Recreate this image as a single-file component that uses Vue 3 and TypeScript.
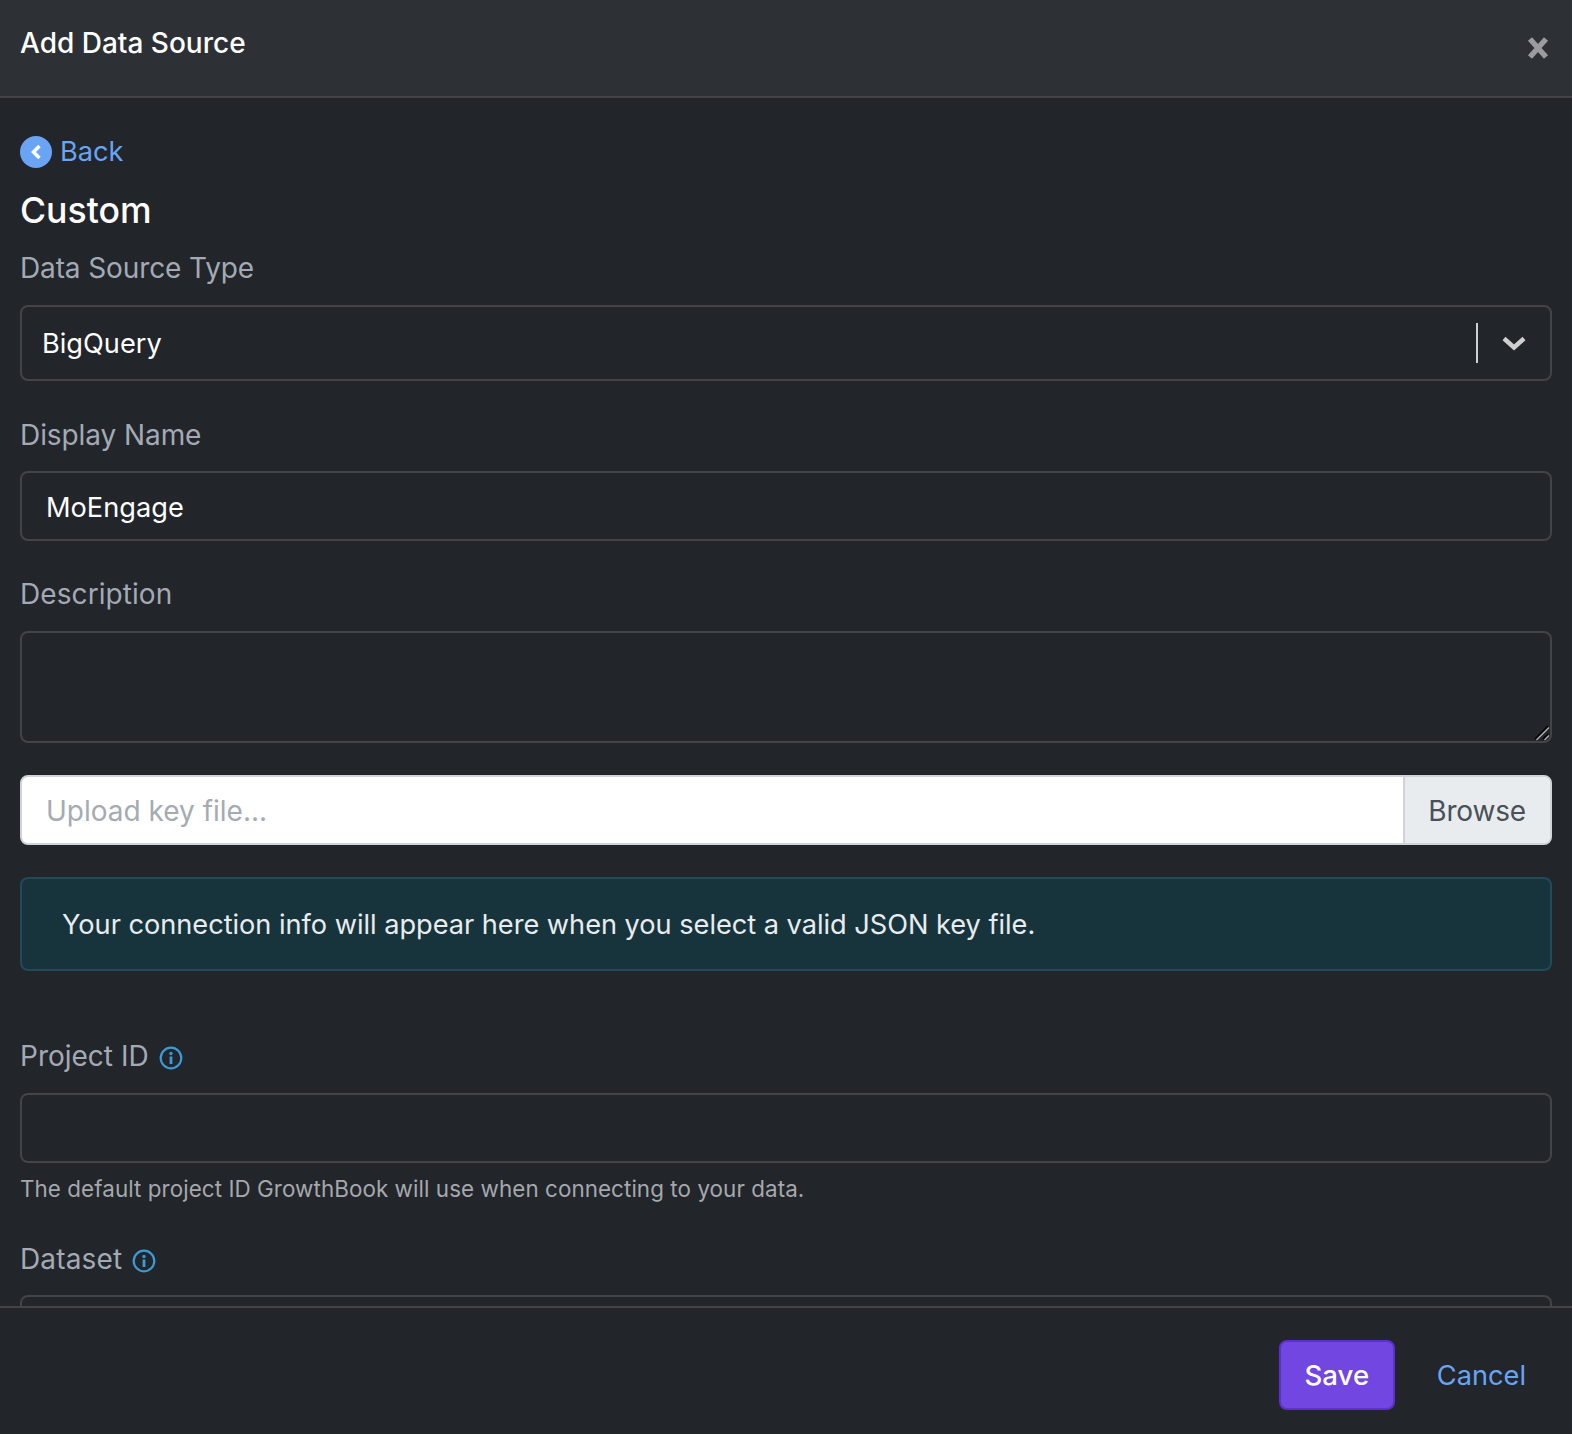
<script setup lang="ts">
const hint: string = 'The default project ID GrowthBook will use when connecting to your data.'
</script>

<template>
  <div class="modal">
    <header class="head">
      <h1 class="title">Add Data Source</h1>
      <button class="close" aria-label="Close">
        <svg width="22" height="24" viewBox="0 0 22 24"><path d="M3 3 19 21M19 3 3 21" stroke="#9a9ca0" stroke-width="5.400" fill="none" /></svg>
      </button>
    </header>

    <main class="body">
      <a class="back">
        <span class="back-dot">
          <svg width="32" height="32" viewBox="0 0 32 32"><path d="M19.500 10 13.500 16l6 6" stroke="#fff" stroke-width="3.500" fill="none" /></svg>
        </span>
        <span>Back</span>
      </a>
      <h2 class="sub">Custom</h2>

      <label class="label l-type">Data Source Type</label>
      <div class="select">
        <span>BigQuery</span>
        <span class="sep"></span>
        <svg class="chev" width="26" height="16" viewBox="0 0 26 16"><path d="M3 3.500 13 12.500 23 3.500" stroke="#cfd0d2" stroke-width="4.400" fill="none" /></svg>
      </div>

      <label class="label l-name">Display Name</label>
      <div class="input value">MoEngage</div>

      <label class="label l-desc">Description</label>
      <div class="textarea">
        <svg class="grip" width="16" height="16" viewBox="0 0 16 16">
          <path d="M1 14 14 1" stroke="#000" stroke-width="1.500" />
          <path d="M2.500 15 15 2.500" stroke="#b5b5b5" stroke-width="1.300" />
          <path d="M9 14 14 9" stroke="#000" stroke-width="1.500" />
          <path d="M10.500 15 15 10.500" stroke="#b5b5b5" stroke-width="1.300" />
        </svg>
      </div>

      <div class="file">
        <span class="file-text">Upload key file...</span>
        <span class="browse">Browse</span>
      </div>

      <div class="alert">Your connection info will appear here when you select a valid JSON key file.</div>

      <label class="label l-proj">Project ID
        <svg class="info" width="24" height="24" viewBox="0 0 24 24"><circle cx="12" cy="12" r="10.300" stroke="#3a9bd6" stroke-width="2.200" fill="none" /><circle cx="12" cy="7.500" r="1.700" fill="#3a9bd6" /><rect x="10.600" y="10.500" width="2.800" height="7.500" fill="#3a9bd6" /></svg>
      </label>
      <div class="input"></div>
      <p class="hint">{{ hint }}</p>

      <label class="label l-data">Dataset
        <svg class="info" width="24" height="24" viewBox="0 0 24 24"><circle cx="12" cy="12" r="10.300" stroke="#3a9bd6" stroke-width="2.200" fill="none" /><circle cx="12" cy="7.500" r="1.700" fill="#3a9bd6" /><rect x="10.600" y="10.500" width="2.800" height="7.500" fill="#3a9bd6" /></svg>
      </label>
      <div class="input"></div>
    </main>

    <footer class="foot">
      <button class="save">Save</button>
      <a class="cancel">Cancel</a>
    </footer>
  </div>
</template>

<style>
html, body { margin: 0; background: #22252a; }
</style>

<style scoped>
.modal {
  width: 1572px;
  height: 1434px;
  display: flex;
  flex-direction: column;
  background: #22252a;
  color: #fff;
  font-family: Inter, "Liberation Sans", sans-serif;
  font-size: 28px;
  line-height: 42px;
  overflow: hidden;
}
.head {
  flex: none;
  height: 96px;
  border-bottom: 2px solid #424446;
  background: #2d3035;
  display: flex;
  justify-content: space-between;
  padding: 0 23px 0 20px;
}
.title {
  margin: 22px 0 0;
  font-size: 28px;
  line-height: 42px;
  font-weight: 500;
}
.close {
  background: none;
  border: 0;
  padding: 0;
  margin: 36px 0 0;
  height: 24px;
  display: flex;
}
.body {
  flex: 1;
  min-height: 0;
  overflow: hidden;
  padding: 36px 20px 0 20px;
}
.back {
  display: flex;
  align-items: center;
  gap: 8px;
  color: #69a5f4;
  height: 36px;
  font-size: 27.200px;
}
.back-dot {
  width: 32px;
  height: 32px;
  border-radius: 50%;
  background: #69a5f4;
  display: flex;
}
.sub {
  margin: 20px 0 0;
  font-size: 35.600px;
  line-height: 42px;
  font-weight: 500;
}
.label {
  display: block;
  color: #a3aab5;
  font-size: 28px;
  line-height: 42px;
  margin-bottom: 16px;
}
.l-type { margin-top: 15px; margin-bottom: 16px; letter-spacing: -0.12px; }
.l-name { margin-top: 33px; margin-bottom: 15px; letter-spacing: -0.08px; }
.l-desc { margin-top: 32px; letter-spacing: 0.08px; }
.l-proj { margin-top: 64px; margin-bottom: 16px; }
.l-data { margin-top: 29px; margin-bottom: 15px; letter-spacing: 0.14px; }
.select {
  height: 76px;
  box-sizing: border-box;
  border: 2px solid #424446;
  border-radius: 8px;
  display: flex;
  align-items: center;
  padding: 0 23px 0 20px;
  font-size: 27.200px;
}
.select > span:first-child { flex: 1; padding-top: 2px; }
.sep {
  width: 2px;
  height: 40px;
  background: #cfd0d2;
  margin-right: 23px;
}
.input {
  height: 70px;
  box-sizing: border-box;
  border: 2px solid #424446;
  border-radius: 8px;
  padding: 14px 24px;
}
.value { font-size: 27.200px; }
.textarea {
  position: relative;
  height: 112px;
  box-sizing: border-box;
  border: 2px solid #424446;
  border-radius: 8px;
}
.grip { position: absolute; right: 0; bottom: 0; }
.file {
  margin-top: 32px;
  height: 70px;
  box-sizing: border-box;
  border: 2px solid #ced4da;
  border-radius: 8px;
  background: #fff;
  display: flex;
  overflow: hidden;
}
.file-text { flex: 1; color: #a5abb2; padding: 13px 24px; }
.browse {
  background: #e9ecef;
  color: #495057;
  border-left: 2px solid #ced4da;
  padding: 13px 24px 12px 23px;
  letter-spacing: -0.17px;
}
.alert {
  margin-top: 32px;
  height: 94px;
  box-sizing: border-box;
  border: 2px solid #224a57;
  border-radius: 8px;
  background: #17343d;
  color: #e8ecee;
  padding: 25px 40px;
  font-size: 27.200px;
  letter-spacing: -0.03px;
}
.hint {
  margin: 7px 0 0;
  font-size: 22.400px;
  line-height: 38px;
  padding-bottom: 1px;
  color: #a5a8ac;
  letter-spacing: 0.07px;
}
.info { vertical-align: -4px; margin-left: 2px; }
.foot {
  flex: none;
  height: 128px;
  box-sizing: border-box;
  border-top: 2px solid #424446;
  display: flex;
  justify-content: flex-end;
  align-items: flex-start;
  padding: 32px 46px 0 0;
}
.save {
  width: 116px;
  height: 70px;
  box-sizing: border-box;
  background: #7246e0;
  border: 2px solid #5c2fd0;
  border-radius: 8px;
  color: #fff;
  font: 500 27.600px/42px Inter, "Liberation Sans", sans-serif;
  padding: 0;
}
.cancel {
  color: #69a5f4;
  margin-left: 42px;
  line-height: 72px;
  font-size: 27.200px;
}
</style>
